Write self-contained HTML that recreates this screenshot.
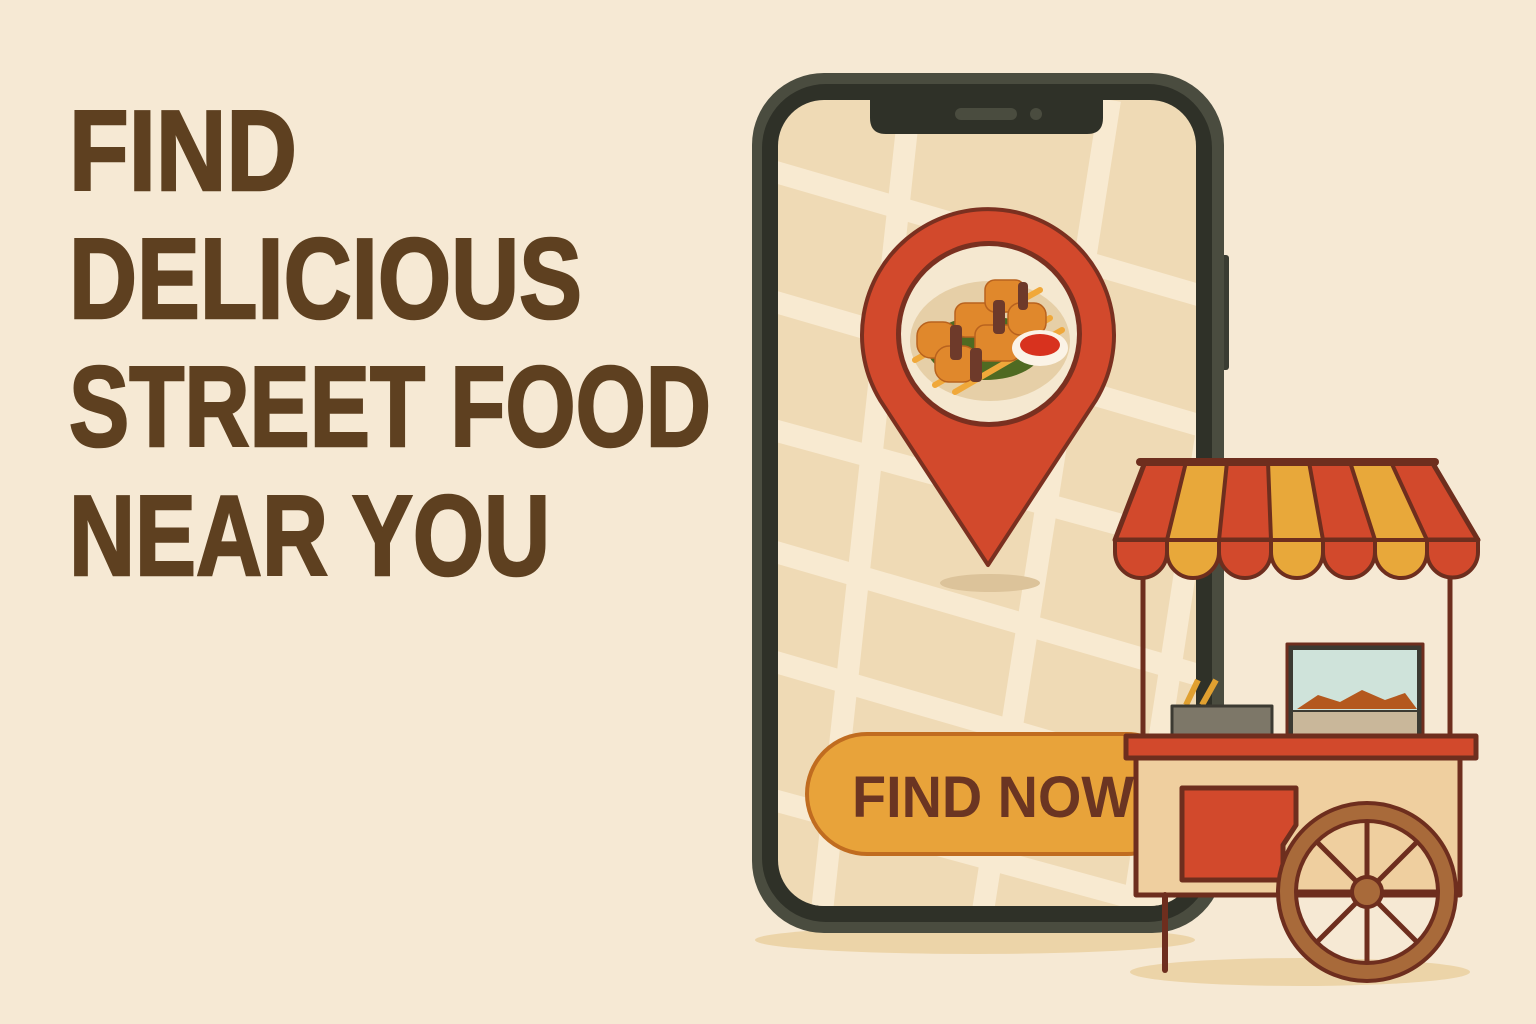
<!DOCTYPE html>
<html><head><meta charset="utf-8"><style>
html,body{margin:0;padding:0;background:#f6e9d4;}
svg{display:block}
</style></head><body>
<svg width="1536" height="1024" viewBox="0 0 1536 1024" xmlns="http://www.w3.org/2000/svg">
<rect width="1536" height="1024" fill="#f6e9d4"/>
<g font-family="'Liberation Sans',sans-serif" font-weight="bold" font-size="114" fill="#5e4020" stroke="#5e4020" stroke-width="2.5">
<text x="69" y="190" textLength="228" lengthAdjust="spacingAndGlyphs">FIND</text>
<text x="69" y="318" textLength="513" lengthAdjust="spacingAndGlyphs">DELICIOUS</text>
<text x="69" y="446" textLength="642" lengthAdjust="spacingAndGlyphs">STREET FOOD</text>
<text x="69" y="575" textLength="481" lengthAdjust="spacingAndGlyphs">NEAR YOU</text>
</g>
<!-- shadows -->
<ellipse cx="975" cy="940" rx="220" ry="14" fill="#ecd4a8"/>
<ellipse cx="1300" cy="972" rx="170" ry="14" fill="#ecd4a8"/>
<!-- phone -->
<rect x="1220" y="255" width="9" height="115" rx="3" fill="#3a3c32"/>
<rect x="752" y="73" width="472" height="860" rx="72" fill="#4a4c3f"/>
<rect x="762" y="84" width="450" height="838" rx="64" fill="#2f3128"/>
<defs><clipPath id="scr"><rect x="778" y="100" width="418" height="806" rx="46"/></clipPath></defs>
<g clip-path="url(#scr)">
<rect x="778" y="100" width="418" height="806" fill="#efdab5"/>
<g stroke="#f8ead1" stroke-width="22" fill="none">
<line x1="700" y1="150" x2="1250" y2="310"/>
<line x1="700" y1="280" x2="1250" y2="440"/>
<line x1="700" y1="410" x2="1250" y2="560"/>
<line x1="700" y1="530" x2="1250" y2="690"/>
<line x1="700" y1="640" x2="1250" y2="800"/>
<line x1="700" y1="780" x2="1250" y2="930"/>
<line x1="910" y1="100" x2="820" y2="930"/>
<line x1="1110" y1="100" x2="980" y2="930"/>
<line x1="1230" y1="280" x2="1130" y2="930"/>
</g>
</g>
<path d="M870 100 H1103 V118 Q1103 134 1087 134 H886 Q870 134 870 118 Z" fill="#2f3128"/>
<rect x="955" y="108" width="62" height="12" rx="6" fill="#4a4c3f"/>
<circle cx="1036" cy="114" r="6" fill="#4a4c3f"/>
<!-- pin -->
<ellipse cx="990" cy="583" rx="50" ry="9" fill="#dcc39a"/>
<path d="M988 565 L880 400 A126 126 0 1 1 1096 400 Z" fill="#d2492c" stroke="#7a3020" stroke-width="4" stroke-linejoin="round"/>
<circle cx="989" cy="334" r="93" fill="#7a3020"/>
<circle cx="989" cy="334" r="88" fill="#f5e8d0"/>
<ellipse cx="990" cy="341" rx="80" ry="60" fill="#e6cfa7"/>
<ellipse cx="985" cy="348" rx="58" ry="32" fill="#4f6a22"/>
<g stroke="#f0a83a" stroke-width="6" stroke-linecap="round">
<line x1="915" y1="360" x2="1040" y2="290"/>
<line x1="935" y1="385" x2="1050" y2="318"/>
<line x1="955" y1="392" x2="1062" y2="330"/>
</g>
<g fill="#e0882c" stroke="#b8621e" stroke-width="1.5">
<rect x="917" y="322" width="40" height="36" rx="14"/>
<rect x="935" y="346" width="42" height="36" rx="14"/>
<rect x="955" y="303" width="42" height="34" rx="10"/>
<rect x="975" y="325" width="45" height="36" rx="10"/>
<rect x="985" y="280" width="40" height="32" rx="10"/>
<rect x="1008" y="303" width="38" height="32" rx="12"/>
</g>
<g fill="#6e3a2a">
<rect x="950" y="325" width="12" height="35" rx="4"/>
<rect x="970" y="348" width="12" height="34" rx="4"/>
<rect x="993" y="300" width="12" height="34" rx="4"/>
<rect x="1018" y="282" width="10" height="28" rx="4"/>
</g>
<ellipse cx="1040" cy="348" rx="28" ry="18" fill="#fbf3e6"/>
<ellipse cx="1040" cy="345" rx="20" ry="11" fill="#d8321e"/>
<!-- button -->
<rect x="807" y="734" width="380" height="120" rx="60" fill="#e8a33a" stroke="#c06c20" stroke-width="4"/>
<text x="852" y="817" font-family="'Liberation Sans',sans-serif" font-weight="bold" font-size="58" fill="#6b3522" textLength="282" lengthAdjust="spacingAndGlyphs">FIND NOW</text>
<!-- cart -->
<g stroke="#6e2e1e" stroke-width="5" stroke-linejoin="round">
<line x1="1143" y1="570" x2="1143" y2="740" />
<line x1="1450" y1="570" x2="1450" y2="740" />
<rect x="1287" y="644" width="136" height="92" fill="#3c3a32" stroke-width="3"/>
<rect x="1293" y="650" width="124" height="60" fill="#cfe3da" stroke="none"/>
<path d="M1297 709 L1318 695 L1340 702 L1362 690 L1385 700 L1405 693 L1417 709 Z" fill="#b4581e" stroke="none"/>
<rect x="1293" y="712" width="124" height="22" fill="#c9b79a" stroke="none"/>
<line x1="1186" y1="705" x2="1198" y2="680" stroke="#e0a030" stroke-width="6"/>
<line x1="1202" y1="705" x2="1216" y2="680" stroke="#e0a030" stroke-width="6"/>
<rect x="1172" y="706" width="100" height="30" fill="#7d7768" stroke="#3c3a32" stroke-width="3"/>
<rect x="1136" y="755" width="324" height="140" fill="#efcf9f"/>
<rect x="1126" y="736" width="350" height="22" fill="#d2492c"/>
<path d="M1182 788 H1296 V825 L1283 845 V880 H1182 Z" fill="#d2492c"/>
<line x1="1165" y1="895" x2="1165" y2="970" stroke-width="6" stroke-linecap="round"/>
<path d="M1145 462 H1432 L1478 540 H1115 Z" fill="#d2492c"/>
</g>
<g stroke="#6e2e1e" stroke-width="4" stroke-linejoin="round">
<path d="M1186 462 L1167 540 H1219 L1227 462 Z" fill="#e8a83a"/>
<path d="M1268 462 L1271 540 H1323 L1309 462 Z" fill="#e8a83a"/>
<path d="M1350 462 L1375 540 H1427 L1391 462 Z" fill="#e8a83a"/>
<line x1="1140" y1="462" x2="1435" y2="462" stroke-width="8" stroke-linecap="round"/>
</g>
<g stroke="#6e2e1e" stroke-width="4">
<path d="M1115 540 h52 v12 a26 26 0 0 1 -52 0 z" fill="#d2492c"/>
<path d="M1167 540 h52 v12 a26 26 0 0 1 -52 0 z" fill="#e8a83a"/>
<path d="M1219 540 h52 v12 a26 26 0 0 1 -52 0 z" fill="#d2492c"/>
<path d="M1271 540 h52 v12 a26 26 0 0 1 -52 0 z" fill="#e8a83a"/>
<path d="M1323 540 h52 v12 a26 26 0 0 1 -52 0 z" fill="#d2492c"/>
<path d="M1375 540 h52 v12 a26 26 0 0 1 -52 0 z" fill="#e8a83a"/>
<path d="M1427 540 h51 v12 a25.5 25.5 0 0 1 -51 0 z" fill="#d2492c"/>
</g>
<!-- wheel -->
<circle cx="1367" cy="892" r="80" fill="none" stroke="#6e2e1e" stroke-width="22"/>
<circle cx="1367" cy="892" r="80" fill="none" stroke="#a86a3a" stroke-width="14"/>
<g stroke="#6e2e1e" stroke-width="5">
<line x1="1367" y1="820" x2="1367" y2="964"/>
<line x1="1295" y1="892" x2="1439" y2="892"/>
<line x1="1316" y1="841" x2="1418" y2="943"/>
<line x1="1418" y1="841" x2="1316" y2="943"/>
</g>
<circle cx="1367" cy="892" r="15" fill="#a86a3a" stroke="#6e2e1e" stroke-width="4"/>
</svg>
</body></html>
